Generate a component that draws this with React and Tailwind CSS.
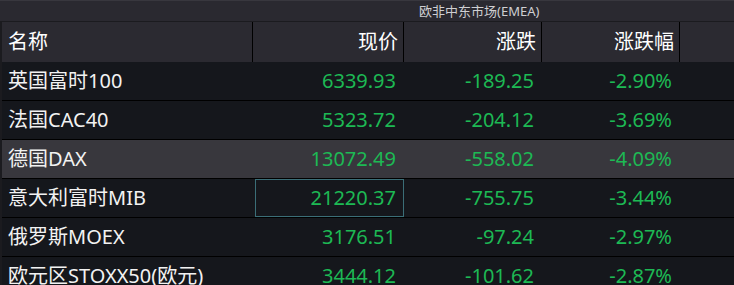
import React from "react";

const rows = [
  ["英国富时100", "6339.93", "-189.25", "-2.90%"],
  ["法国CAC40", "5323.72", "-204.12", "-3.69%"],
  ["德国DAX", "13072.49", "-558.02", "-4.09%"],
  ["意大利富时MIB", "21220.37", "-755.75", "-3.44%"],
  ["俄罗斯MOEX", "3176.51", "-97.24", "-2.97%"],
  ["欧元区STOXX50(欧元)", "3444.12", "-101.62", "-2.87%"],
];

const font = { fontFamily: '"Noto Sans", "Noto Sans CJK SC", sans-serif' };

export default function App() {
  return (
    <div className="w-[734px] h-[285px] overflow-hidden bg-[#15171c]" style={font}>
      <div className="h-[21px] bg-[#2a2930] border-t border-[#38373e] flex items-center pl-[419px] text-[13px] leading-none text-[#cfcfd2]">
        欧非中东市场(EMEA)
      </div>
      <div className="h-px bg-[#1b1b1f]" />
      <div className="border-l-2 border-[#1b1b1f]">
        <div className="grid grid-cols-[251px_151px_138px_138px_1fr] h-[40px] bg-[#2b2a31] text-[20px] text-white">
          <div className="flex items-center pl-[6px] border-r border-black">名称</div>
          <div className="flex items-center justify-end pr-[5px] border-r border-black">现价</div>
          <div className="flex items-center justify-end pr-[5px] border-r border-black">涨跌</div>
          <div className="flex items-center justify-end pr-[5px] border-r border-black">涨跌幅</div>
          <div />
        </div>
        {rows.map((r, i) => (
          <div
            key={i}
            className={
              "grid grid-cols-[251px_151px_138px_138px_1fr] h-[39px] border-b border-black text-[20px] " +
              (i === 2 ? "bg-[#38373d]" : "bg-[#15171c]")
            }
          >
            <div className="flex items-center pl-[6px] text-[#f2f2f2] whitespace-nowrap">{r[0]}</div>
            <div className="flex pl-[2px]">
              <div
                className={
                  "flex-1 flex items-center justify-end pr-[7px] text-[#1db954] " +
                  (i === 3 ? "border border-[#3b6e77]" : "border border-transparent")
                }
              >
                {r[1]}
              </div>
            </div>
            <div className="flex items-center justify-end pr-[8px] text-[#1db954]">{r[2]}</div>
            <div className="flex items-center justify-end pr-[8px] text-[#1db954]">{r[3]}</div>
            <div />
          </div>
        ))}
      </div>
    </div>
  );
}
